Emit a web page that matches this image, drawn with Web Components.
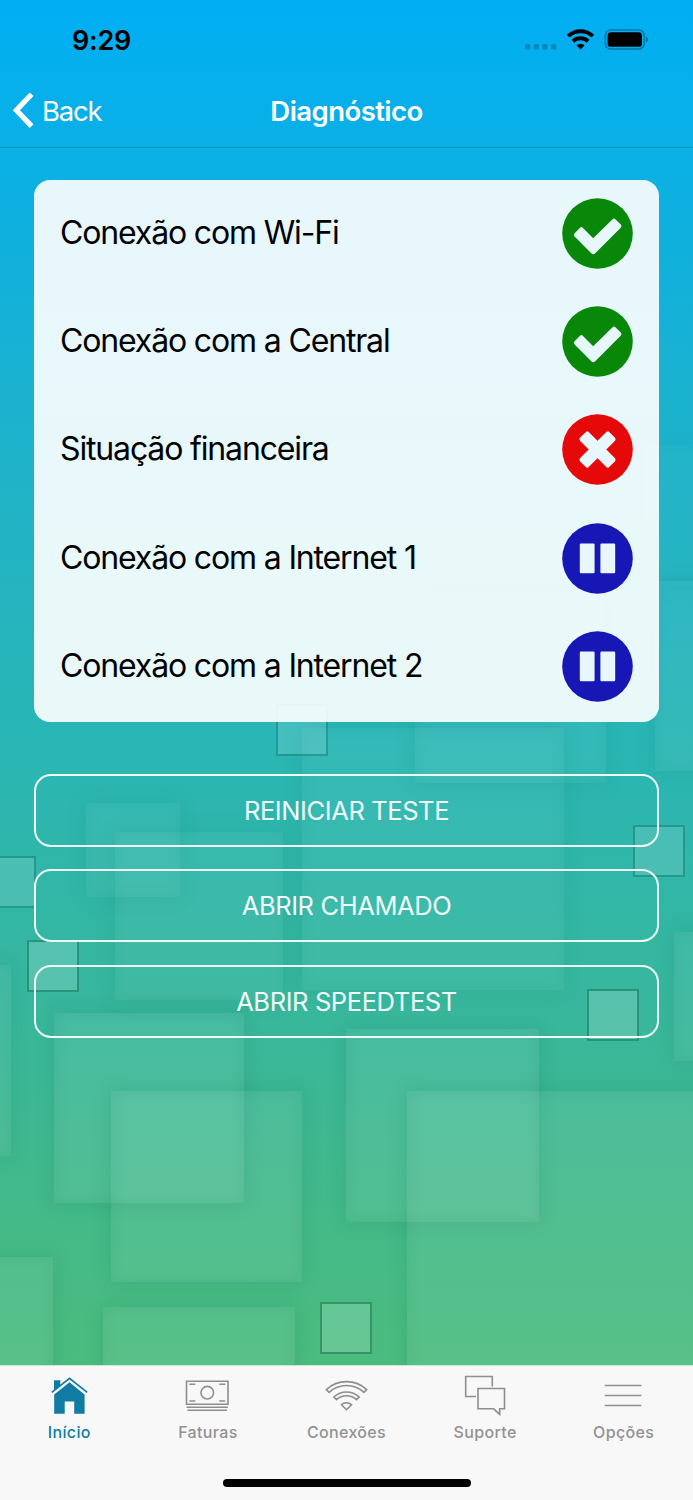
<!DOCTYPE html>
<html lang="pt-BR">
<head>
<meta charset="utf-8">
<meta name="viewport" content="width=device-width, initial-scale=1">
<title>Diagnóstico</title>
<style>
    body {
        margin: 0;
        font-family: Inter, "Liberation Sans", sans-serif;
    }
</style>
</head>
<body>
<app-screen>
    <status-bar slot="top" time="9:29"></status-bar>
    <nav-bar slot="top" back="Back">Diagnóstico</nav-bar>
    <check-list>
        <check-item state="ok">Conexão com Wi-Fi</check-item>
        <check-item state="ok">Conexão com a Central</check-item>
        <check-item state="error">Situação financeira</check-item>
        <check-item state="paused">Conexão com a Internet 1</check-item>
        <check-item state="paused">Conexão com a Internet 2</check-item>
    </check-list>
    <outline-button>REINICIAR TESTE</outline-button>
    <outline-button>ABRIR CHAMADO</outline-button>
    <outline-button>ABRIR SPEEDTEST</outline-button>
    <tab-bar slot="bottom">
        <tab-item icon="home" active>Início</tab-item>
        <tab-item icon="money">Faturas</tab-item>
        <tab-item icon="wifi">Conexões</tab-item>
        <tab-item icon="chat">Suporte</tab-item>
        <tab-item icon="menu">Opções</tab-item>
    </tab-bar>
</app-screen>

<script>
class AppScreen extends HTMLElement {
    constructor() {
        super();
        this.attachShadow({mode: 'open'}).innerHTML = `
            <square-backdrop></square-backdrop>
            <slot name="top"></slot>
            <main><slot></slot></main>
            <slot name="bottom"></slot>
            <style>
                :host {
                    display: flex;
                    flex-direction: column;
                    position: relative;
                    width: 693px;
                    height: 1500px;
                    overflow: hidden;
                }
                main {
                    display: flex;
                    flex-direction: column;
                    flex: 1;
                    position: relative;
                    box-sizing: border-box;
                    padding: 32px 34px 0;
                }
            </style>
        `;
    }
}

class SquareBackdrop extends HTMLElement {
    constructor() {
        super();
        // x, y, size, opacity
        const large = [
            [645, 445, 140, .2], [655, 581, 190, .6], [415, 592, 191, .5], [302, 728, 262, .5],
            [86, 803, 94, .5], [115, 832, 168, .55], [674, 932, 129, .7], [-180, 965, 191, .7],
            [54, 1013, 190, .85], [346, 1029, 193, .85], [111, 1091, 191, .85], [407, 1091, 400, .85],
            [-138, 1257, 191, .85], [103, 1307, 192, .85],
        ];
        const small = [
            [276, 704, 52, .8], [633, 825, 52, .8], [-16, 856, 52, .8],
            [27, 940, 52, 1], [587, 989, 52, 1], [320, 1302, 52, 1],
        ];
        const draw = (name) => ([x, y, size, opacity]) =>
            `<i class="${name}" style="left:${x}px;top:${y}px;width:${size}px;height:${size}px;opacity:${opacity}"></i>`;
        this.attachShadow({mode: 'open'}).innerHTML = `
            ${large.map(draw('large')).join('')}
            ${small.map(draw('small')).join('')}
            <style>
                :host {
                    display: block;
                    position: absolute;
                    inset: 0;
                    overflow: hidden;
                    background: linear-gradient(#00aef3 0, #0ab0e6 150px, #14b1d8 300px, #21b3c6 500px,
                        #29b6b6 730px, #38b79c 1010px, #45ba87 1240px, #4bbc7e 1365px);
                }
                i { position: absolute; box-sizing: border-box; }
                .large {
                    background: rgba(255, 255, 255, .09);
                    box-shadow: 0 0 18px rgba(20, 110, 80, .2), inset 0 0 14px rgba(20, 110, 80, .12);
                }
                .small {
                    background: rgba(255, 255, 255, .16);
                    border: 2px solid rgba(15, 85, 65, .36);
                    background-clip: padding-box;
                }
            </style>
        `;
    }
}

class StatusBar extends HTMLElement {
    constructor() {
        super();
        this.attachShadow({mode: 'open'}).innerHTML = `
            <time></time>
            <svg width="126" height="24" viewBox="0 0 126 24">
                <g fill="#0587b8">
                    <rect x="1" y="16" width="5.4" height="5.4" rx="1.6"/>
                    <rect x="9.6" y="16" width="5.4" height="5.4" rx="1.6"/>
                    <rect x="18.3" y="16" width="5.4" height="5.4" rx="1.6"/>
                    <rect x="27" y="16" width="5.4" height="5.4" rx="1.6"/>
                </g>
                <g fill="none" stroke="#000" stroke-width="4">
                    <path d="M44.2 8.2a17.5 17.5 0 0 1 24.6 0"/>
                    <path d="M48.9 13.200a11.300 11.300 0 0 1 15.200 0"/>
                </g>
                <path d="M56.500 21.600l-4-4.300a5.800 5.800 0 0 1 8 0z"/>
                <rect x="81.3" y="2" width="39" height="19" rx="5.600" fill="none" stroke="#0577a3" stroke-width="1.6"/>
                <rect x="83.600" y="4.200" width="34.400" height="14.600" rx="3.400"/>
                <path d="M122 8.600c2.800.8 2.800 5.200 0 6z" fill="#0577a3"/>
            </svg>
            <style>
                :host {
                    display: flex;
                    justify-content: space-between;
                    position: relative;
                    box-sizing: border-box;
                    height: 74px;
                    padding: 28px 43px 0 72px;
                }
                time { font-size: 27px; font-weight: 600; line-height: 25px; letter-spacing: -.2px; }
            </style>
        `;
        this.shadowRoot.querySelector('time').textContent = this.getAttribute('time');
    }
}

class NavBar extends HTMLElement {
    constructor() {
        super();
        this.attachShadow({mode: 'open'}).innerHTML = `
            <a>
                <svg width="22" height="36" viewBox="0 0 22 36">
                    <path d="M19.600 1.200 4.400 17.300l15.200 15.800" fill="none" stroke="#fff" stroke-width="5.200"/>
                </svg>
                <span></span>
            </a>
            <h1><slot></slot></h1>
            <style>
                :host {
                    display: grid;
                    grid-template-columns: 1fr auto 1fr;
                    align-items: center;
                    position: relative;
                    box-sizing: border-box;
                    height: 74px;
                    padding: 0 12px;
                    color: #fff;
                    border-bottom: 1px solid #0796c5;
                }
                a { display: flex; align-items: center; gap: 8px; font-size: 27.500px; letter-spacing: -1.200px; }
                h1 { margin: 0; font-size: 27.500px; font-weight: 600; letter-spacing: -.550px; }
            </style>
        `;
        this.shadowRoot.querySelector('span').textContent = this.getAttribute('back');
    }
}

class CheckList extends HTMLElement {
    constructor() {
        super();
        this.attachShadow({mode: 'open'}).innerHTML = `
            <slot></slot>
            <style>
                :host {
                    display: flex;
                    flex-direction: column;
                    height: 542px;
                    margin-bottom: 52px;
                    border-radius: 16px;
                    background: rgba(255, 255, 255, .9);
                }
            </style>
        `;
    }
}

const stateIcons = {
    ok: ['#088708', '<path d="M12.600 38.500q-1.600-1.600 0-3.200l5.200-5.400q1.600-1.600 3.200 0L31.200 40.200 50.300 21.500q1.700-1.700 3.300-.1l5.200 5.200q1.500 1.600-.1 3.200L33 55.400q-1.800 1.600-3.500 0z"/>'],
    error: ['#e60909', '<g transform="rotate(45 35.5 35.5)"><rect x="14.800" y="29.300" width="41.400" height="12.400" rx="2.400"/><rect x="29.300" y="14.800" width="12.400" height="41.400" rx="2.400"/></g>'],
    paused: ['#1717b5', '<rect x="17.800" y="20.600" width="14.800" height="29.600" rx="1.200"/><rect x="38.400" y="20.600" width="14.800" height="29.600" rx="1.200"/>'],
};

class CheckItem extends HTMLElement {
    constructor() {
        super();
        const [color, mark] = stateIcons[this.getAttribute('state')];
        this.attachShadow({mode: 'open'}).innerHTML = `
            <span><slot></slot></span>
            <svg width="71" height="71" viewBox="0 0 71 71">
                <circle cx="35.5" cy="35.5" r="35.3" fill="${color}"/>
                <g fill="#e8f7fb">${mark}</g>
            </svg>
            <style>
                :host {
                    display: flex;
                    justify-content: space-between;
                    align-items: flex-start;
                    box-sizing: border-box;
                    height: 108.5px;
                    padding: 17.5px 26.5px 0 26px;
                }
                span { font-size: 32px; line-height: 70px; letter-spacing: -1.15px; white-space: nowrap; }
            </style>
        `;
    }
}

class OutlineButton extends HTMLElement {
    constructor() {
        super();
        this.attachShadow({mode: 'open'}).innerHTML = `
            <button><slot></slot></button>
            <style>
                :host { display: block; height: 73px; margin-bottom: 22.3px; }
                button {
                    width: 100%;
                    height: 100%;
                    padding: 0;
                    border: 2px solid rgba(255, 255, 255, .93);
                    border-radius: 17px;
                    background: none;
                    color: #f2fbfa;
                    font: inherit;
                    font-size: 25.5px;
                    letter-spacing: -.4px;
                }
            </style>
        `;
    }
}

class TabBar extends HTMLElement {
    constructor() {
        super();
        this.attachShadow({mode: 'open'}).innerHTML = `
            <nav><slot></slot></nav>
            <div></div>
            <style>
                :host {
                    display: flex;
                    flex-direction: column;
                    align-items: center;
                    position: relative;
                    box-sizing: border-box;
                    height: 135.5px;
                    background: #f8f8f8;
                    border-top: 1px solid #cfe3d8;
                }
                nav { display: grid; grid-template-columns: repeat(5, 1fr); width: 100%; height: 113px; }
                div { width: 248px; height: 8px; border-radius: 4px; background: #000; }
            </style>
        `;
    }
}

const tabIcons = {
    home: `<g fill="#117ca3" stroke="none">
            <path d="M9 3.300h6.300v5.400L9 13.500z"/>
            <path d="M24.500 5.300 39.600 17.500V36.800H29.200V24.500H19.700v12.300H9.200V17.500z"/>
        </g>
        <path d="M6.800 15.300 24.500 1.400 42.200 15.300" fill="none" stroke="#117ca3" stroke-width="1.700"/>`,
    money: `<path d="M3.500 4.200h41.500v23H3.500zM3.500 30.300h41.500M4.500 33.200h39.500M6.300 7.300h6M36.300 7.300h6M6.300 24h6M36.300 24h6"/>
        <circle cx="24.300" cy="15.700" r="6.300"/>`,
    wifi: `<path d="M4.300 12.600a29.500 29.500 0 0 1 40.400 0l-2.800 2.800a25.500 25.500 0 0 0-34.800 0z"/>
        <path d="M11.800 20a18.800 18.800 0 0 1 25.400 0l-2.700 2.600a15 15 0 0 0-20 0z"/>
        <path d="M19.500 27.700a7.500 7.500 0 0 1 10 0l-5 5z"/>`,
    chat: `<path d="M15 19.500H4.700V-.5h26.600V9.500M17 11.500h26.500v20.300h-4.800v5.600l-6-5.600H17z"/>`,
    menu: `<path d="M5.800 8.500h36.500M5.800 18.500h36.500M5.800 28.500h36.500"/>`,
};

class TabItem extends HTMLElement {
    constructor() {
        super();
        this.attachShadow({mode: 'open'}).innerHTML = `
            <svg width="49" height="40" viewBox="0 0 49 40" fill="none" stroke="#8e8e8e" stroke-width="1.6" overflow="visible">
                ${tabIcons[this.getAttribute('icon')]}
            </svg>
            <span><slot></slot></span>
            <style>
                :host {
                    display: flex;
                    flex-direction: column;
                    align-items: center;
                    padding-top: 11px;
                    color: #929292;
                }
                :host([active]) { color: #117ca3; }
                span { margin-top: 5px; font-size: 16px; font-weight: 500; line-height: 20px; letter-spacing: .35px; }
            </style>
        `;
    }
}

customElements.define('square-backdrop', SquareBackdrop);
customElements.define('app-screen', AppScreen);
customElements.define('status-bar', StatusBar);
customElements.define('nav-bar', NavBar);
customElements.define('check-list', CheckList);
customElements.define('check-item', CheckItem);
customElements.define('outline-button', OutlineButton);
customElements.define('tab-bar', TabBar);
customElements.define('tab-item', TabItem);
</script>
</body>
</html>
